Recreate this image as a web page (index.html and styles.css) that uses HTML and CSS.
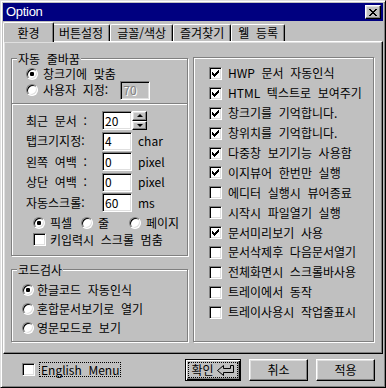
FILE: index.html
```html
<!DOCTYPE html>
<html lang="ko">

<head>
  <meta charset="UTF-8">
  <meta name="viewport" content="width=device-width, initial-scale=1.0">
  <title>Option</title>
  <link rel="stylesheet" href="styles.css">
</head>

<body>
  <div class="window">
    <div class="titlebar">
      <span class="titlebar-text">Option</span>
      <span class="close-btn">
        <svg width="8" height="7" viewBox="0 0 8 7" shape-rendering="crispEdges">
          <path d="M0 0h2v1H0zM6 0h2v1H6zM1 1h2v1H1zM5 1h2v1H5zM2 2h4v1H2zM3 3h2v1H3zM2 4h4v1H2zM1 5h2v1H1zM5 5h2v1H5zM0 6h2v1H0zM6 6h2v1H6z" fill="#000"/>
        </svg>
      </span>
    </div>

    <div class="tabs">
      <span class="tab tab-active">환경</span>
      <span class="tab">버튼설정</span>
      <span class="tab">글꼴/색상</span>
      <span class="tab">즐겨찾기</span>
      <span class="tab">웰 등록</span>
    </div>

    <div class="panel">
      <div class="col-left">
        <div class="group group-wrap">
          <span class="group-title">자동 줄바꿈</span>
          <label class="opt first"><span class="radio on"></span>창크기에 맞춤</label>
          <label class="opt"><span class="radio"></span>사용자 지정:<span class="field field-disabled">70</span></label>
        </div>

        <div class="box box-lower">
          <div class="field-row">
            <span class="field-label">최근 문서 :</span>
            <span class="field">20</span>
            <span class="spin">
              <span class="spin-btn up"></span>
              <span class="spin-btn down"></span>
            </span>
          </div>
          <div class="field-row">
            <span class="field-label">탭크기지정:</span>
            <span class="field">4</span>
            <span class="unit">char</span>
          </div>
          <div class="field-row">
            <span class="field-label">왼쪽 여백 :</span>
            <span class="field">0</span>
            <span class="unit">pixel</span>
          </div>
          <div class="field-row">
            <span class="field-label">상단 여백 :</span>
            <span class="field">0</span>
            <span class="unit">pixel</span>
          </div>
          <div class="field-row">
            <span class="field-label">자동스크롤:</span>
            <span class="field">60</span>
            <span class="unit">ms</span>
          </div>
          <div class="opt-row">
            <label class="opt opt-col"><span class="radio on"></span>픽셀</label>
            <label class="opt opt-col"><span class="radio"></span>줄</label>
            <label class="opt"><span class="radio"></span>페이지</label>
          </div>
          <label class="opt check-line"><span class="check"></span>키입력시 스크롤 멈춤</label>
        </div>

        <div class="group group-code">
          <span class="group-title">코드검사</span>
          <label class="opt first"><span class="radio on"></span>한글코드 자동인식</label>
          <label class="opt"><span class="radio"></span>혼합문서보기로 열기</label>
          <label class="opt"><span class="radio"></span>영문모드로 보기</label>
        </div>
      </div>

      <div class="box box-checks">
        <label class="check-row"><span class="check"><svg width="7" height="7" viewBox="0 0 7 7" shape-rendering="crispEdges"><path d="M6 0h1v1H6zM5 1h2v1H5zM0 2h1v1H0zM4 2h3v1H4zM0 3h2v1H0zM3 3h3v1H3zM0 4h5v1H0zM1 5h3v1H1zM2 6h1v1H2z"/></svg></span>HWP 문서 자동인식</label>
        <label class="check-row"><span class="check"><svg width="7" height="7" viewBox="0 0 7 7" shape-rendering="crispEdges"><path d="M6 0h1v1H6zM5 1h2v1H5zM0 2h1v1H0zM4 2h3v1H4zM0 3h2v1H0zM3 3h3v1H3zM0 4h5v1H0zM1 5h3v1H1zM2 6h1v1H2z"/></svg></span>HTML 텍스트로 보여주기</label>
        <label class="check-row"><span class="check"><svg width="7" height="7" viewBox="0 0 7 7" shape-rendering="crispEdges"><path d="M6 0h1v1H6zM5 1h2v1H5zM0 2h1v1H0zM4 2h3v1H4zM0 3h2v1H0zM3 3h3v1H3zM0 4h5v1H0zM1 5h3v1H1zM2 6h1v1H2z"/></svg></span>창크기를 기억합니다.</label>
        <label class="check-row"><span class="check"><svg width="7" height="7" viewBox="0 0 7 7" shape-rendering="crispEdges"><path d="M6 0h1v1H6zM5 1h2v1H5zM0 2h1v1H0zM4 2h3v1H4zM0 3h2v1H0zM3 3h3v1H3zM0 4h5v1H0zM1 5h3v1H1zM2 6h1v1H2z"/></svg></span>창위치를 기억합니다.</label>
        <label class="check-row"><span class="check"><svg width="7" height="7" viewBox="0 0 7 7" shape-rendering="crispEdges"><path d="M6 0h1v1H6zM5 1h2v1H5zM0 2h1v1H0zM4 2h3v1H4zM0 3h2v1H0zM3 3h3v1H3zM0 4h5v1H0zM1 5h3v1H1zM2 6h1v1H2z"/></svg></span>다중창 보기기능 사용함</label>
        <label class="check-row"><span class="check"><svg width="7" height="7" viewBox="0 0 7 7" shape-rendering="crispEdges"><path d="M6 0h1v1H6zM5 1h2v1H5zM0 2h1v1H0zM4 2h3v1H4zM0 3h2v1H0zM3 3h3v1H3zM0 4h5v1H0zM1 5h3v1H1zM2 6h1v1H2z"/></svg></span>이지뷰어 한번만 실행</label>
        <label class="check-row"><span class="check"></span>에디터 실행시 뷰어종료</label>
        <label class="check-row"><span class="check"></span>시작시 파일열기 실행</label>
        <label class="check-row"><span class="check"><svg width="7" height="7" viewBox="0 0 7 7" shape-rendering="crispEdges"><path d="M6 0h1v1H6zM5 1h2v1H5zM0 2h1v1H0zM4 2h3v1H4zM0 3h2v1H0zM3 3h3v1H3zM0 4h5v1H0zM1 5h3v1H1zM2 6h1v1H2z"/></svg></span>문서미리보기 사용</label>
        <label class="check-row"><span class="check"></span>문서삭제후 다음문서열기</label>
        <label class="check-row"><span class="check"></span>전체화면시 스크롤바사용</label>
        <label class="check-row"><span class="check"></span>트레이에서 동작</label>
        <label class="check-row"><span class="check"></span>트레이사용시 작업줄표시</label>
      </div>
    </div>

    <div class="footer">
      <label class="english"><span class="check"></span><span class="focus-label">English Menu</span></label>
      <div class="buttons">
        <span class="btn btn-default">
          <span class="btn-focus">확인
            <svg class="enter-icon" width="18" height="11" viewBox="0 0 18 11">
              <path d="M13.5 0.5H16.5V7.5H6.5V10.5L0.5 5.5L6.5 0.5V3.5H13.5Z" fill="none" stroke="#000"/>
            </svg>
          </span>
        </span>
        <span class="btn">취소</span>
        <span class="btn">적용</span>
      </div>
    </div>
  </div>
</body>

</html>
```

FILE: styles.css
```css
:root {
  --face: #c0c0c0;
  --light: #dfdfdf;
  --shadow: #808080;
  --dark: #000;
  --title: #000080;
}

* {
  box-sizing: border-box;
}

body {
  margin: 0;
  font-family: "Noto Sans CJK KR", sans-serif;
  font-size: 12px;
  line-height: 12px;
  word-spacing: 3.3px;
  color: #000;
  background: var(--face);
}

.window {
  width: 386px;
  height: 388px;
  padding: 2px;
  border: 1px solid;
  border-color: var(--light) var(--dark) var(--dark) var(--light);
  box-shadow: inset 1px 1px #fff, inset -1px -1px var(--shadow);
  background: var(--face);
  display: flex;
  flex-direction: column;
}

/* title bar */
.titlebar {
  height: 18px;
  background: var(--title);
  display: flex;
  align-items: center;
  padding-left: 3px;
  flex-shrink: 0;
}

.titlebar-text {
  font-family: "Liberation Sans", sans-serif;
  font-size: 13px;
  letter-spacing: -0.3px;
  color: #fff;
}

.close-btn {
  margin-left: auto;
  margin-right: 2px;
  width: 16px;
  height: 14px;
  border: 1px solid;
  border-color: #fff var(--dark) var(--dark) #fff;
  box-shadow: inset -1px -1px var(--shadow), inset 1px 1px var(--light);
  background: var(--face);
  display: flex;
  align-items: center;
  justify-content: center;
}

/* tabs */
.tabs {
  height: 20px;
  display: flex;
  align-items: flex-end;
  padding-left: 2px;
  flex-shrink: 0;
}

.tab {
  height: 17px;
  min-width: 47px;
  padding: 0 6px;
  border-left: 1px solid #fff;
  border-top: 1px solid #fff;
  border-right: 1px solid var(--dark);
  border-radius: 2px 2px 0 0;
  box-shadow: inset -1px 0 var(--shadow);
  display: flex;
  align-items: center;
  justify-content: center;
  white-space: nowrap;
}

.tab-active {
  height: 20px;
  min-width: 51px;
  margin: 0 -2px -1px;
  position: relative;
  z-index: 1;
  background: var(--face);
}

/* tab page */
.panel {
  height: 313px;
  flex-shrink: 0;
  border: 1px solid;
  border-color: #fff var(--dark) var(--dark) #fff;
  box-shadow: inset -1px -1px var(--shadow), inset 1px 1px var(--light);
  display: flex;
  gap: 5px;
  padding: 15px 8px 0 7px;
}

.col-left {
  width: 177px;
  margin-top: 1px;
  display: flex;
  flex-direction: column;
}

.group,
.box {
  border: 1px solid var(--shadow);
  box-shadow: inset 1px 1px #fff, 1px 1px #fff;
  display: flex;
  flex-direction: column;
}

.group-title {
  align-self: flex-start;
  height: 12px;
  margin: -6px 0 0 5px;
  padding: 0 1px;
  background: var(--face);
  white-space: nowrap;
}

.group-wrap {
  height: 46px;
}

.group-wrap .opt {
  margin-left: 14px;
}

.group-wrap .first {
  margin-top: 1px;
}

.group-code {
  height: 73px;
  margin-top: 13px;
}

.group-code .opt {
  margin: 3px 0 0 10px;
}

.group-code .opt.first {
  margin-top: 6px;
}

.group-code .radio {
  margin-right: 3px;
}

.box-lower {
  height: 152px;
  border-top: 0;
  padding: 7px 0 0 14px;
}

/* options */
.opt {
  height: 16px;
  display: flex;
  align-items: center;
  white-space: nowrap;
}

.radio {
  width: 12px;
  height: 12px;
  flex-shrink: 0;
  margin-right: 5px;
  border-radius: 50%;
  border: 1px solid;
  border-color: var(--shadow) #fff #fff var(--shadow);
  box-shadow: inset 1px 1px var(--dark), inset -1px -1px var(--light);
  background: #fff;
}

.radio.on {
  background: radial-gradient(circle, #000 0 2px, #fff 2.4px);
}

.check {
  width: 13px;
  height: 13px;
  flex-shrink: 0;
  border: 1px solid;
  border-color: var(--shadow) #fff #fff var(--shadow);
  box-shadow: inset 1px 1px var(--dark), inset -1px -1px var(--light);
  background: #fff;
  display: flex;
  align-items: center;
  justify-content: center;
}

/* edit fields */
.field-row {
  height: 19px;
  margin-bottom: 1.5px;
  display: flex;
  align-items: center;
}

.field-label {
  width: 76px;
  white-space: nowrap;
}

.field {
  width: 30px;
  height: 19px;
  padding-left: 2px;
  border: 1px solid;
  border-color: var(--shadow) #fff #fff var(--shadow);
  box-shadow: inset 1px 1px var(--dark), inset -1px -1px var(--light);
  background: #fff;
  display: flex;
  align-items: center;
}

.field-disabled {
  margin-left: 12px;
  background: var(--face);
  color: var(--shadow);
  text-shadow: 1px 1px #fff;
}

.unit {
  margin-left: 6px;
}

.spin {
  width: 15px;
  height: 19px;
  display: flex;
  flex-direction: column;
}

.spin-btn {
  flex: 1;
  border: 1px solid;
  border-color: #fff var(--dark) var(--dark) #fff;
  box-shadow: inset -1px -1px var(--shadow), inset 1px 1px var(--light);
  display: flex;
  align-items: center;
  justify-content: center;
}

.spin-btn::before {
  content: "";
  border-left: 3px solid transparent;
  border-right: 3px solid transparent;
}

.spin-btn.up::before {
  border-bottom: 3px solid #000;
}

.spin-btn.down::before {
  border-top: 3px solid #000;
}

.opt-row {
  display: flex;
  margin: 1px 0 0 7px;
}

.opt-col {
  width: 48px;
}

.check-line {
  margin: 1px 0 0 7px;
}

.check-line .check {
  margin-right: 4px;
}

/* right column */
.box-checks {
  width: 181px;
  height: 285px;
  padding: 5.5px 0 0 15px;
}

.check-row {
  height: 19.9px;
  display: flex;
  align-items: center;
  white-space: nowrap;
}

.check-row .check {
  margin-right: 6px;
}

/* bottom */
.footer {
  flex: 1;
  display: flex;
  align-items: flex-start;
  padding: 5px 8px 0 19px;
}

.english {
  margin-top: 3px;
  display: flex;
  align-items: center;
}

.english .check {
  margin-right: 4px;
}

.focus-label {
  height: 15px;
  padding: 0 1px;
  border: 1px dotted #000;
  display: flex;
  align-items: center;
}

.buttons {
  margin-left: auto;
  display: flex;
  gap: 8px;
}

.btn {
  width: 59px;
  height: 22px;
  border: 1px solid;
  border-color: #fff var(--dark) var(--dark) #fff;
  box-shadow: inset -1px -1px var(--shadow), inset 1px 1px var(--light);
  display: flex;
  align-items: center;
  justify-content: center;
}

.btn-default {
  width: 56px;
  border-color: var(--dark);
  box-shadow: inset 1px 1px #fff, inset -1px -1px var(--dark), inset -2px -2px var(--shadow);
  padding: 2px;
}

.btn-focus {
  width: 100%;
  height: 100%;
  border: 1px dotted #000;
  display: flex;
  align-items: center;
  justify-content: center;
  white-space: nowrap;
}

.enter-icon {
  margin-left: 3px;
}
```
